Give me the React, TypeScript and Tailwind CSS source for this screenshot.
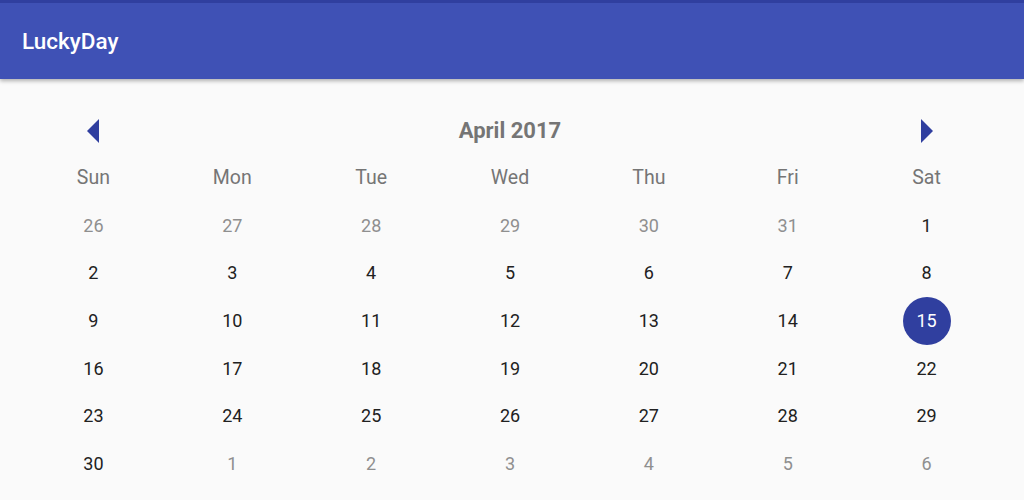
export default function App() {
  const days = ["Sun", "Mon", "Tue", "Wed", "Thu", "Fri", "Sat"];
  const cells: { n: number; cur: boolean }[] = [];
  [26, 27, 28, 29, 30, 31].forEach((n) => cells.push({ n, cur: false }));
  for (let i = 1; i <= 30; i++) cells.push({ n: i, cur: true });
  for (let i = 1; i <= 6; i++) cells.push({ n: i, cur: false });
  const selected = 15;

  return (
    <div className="w-[1024px] h-[500px] overflow-hidden bg-[#fafafa] font-['Roboto',sans-serif]">
      <div className="relative z-10 bg-[#3f51b5] border-t-[3px] border-[#303f9f] h-[79px] flex items-center px-[22px] shadow-[0_2px_4px_rgba(0,0,0,0.3)]">
        <span className="text-white text-[22.5px] font-medium pt-[2px]">LuckyDay</span>
      </div>

      <div className="ml-6 w-[972px]">
        <div className="grid grid-cols-7 h-[47px] mt-[28px] items-center">
          <div className="flex justify-center">
            <svg width="12" height="24" viewBox="0 0 12 24">
              <polygon points="12,0 0,12 12,24" fill="#303f9f" />
            </svg>
          </div>
          <div className="col-span-5 text-center text-[22px] font-bold text-[#757575]">
            April 2017
          </div>
          <div className="flex justify-center">
            <svg width="12" height="24" viewBox="0 0 12 24">
              <polygon points="0,0 12,12 0,24" fill="#303f9f" />
            </svg>
          </div>
        </div>

        <div className="grid grid-cols-7">
          {days.map((d) => (
            <div key={d} className="h-[47.6px] flex items-center justify-center text-[19.5px] text-[#757575]">
              {d}
            </div>
          ))}
          {cells.map((c, i) => (
            <div key={i} className="h-[47.6px] flex items-center justify-center">
              {c.cur && c.n === selected ? (
                <span className="w-[48px] h-[48px] rounded-full bg-[#303f9f] text-white text-[18px] flex items-center justify-center">
                  {c.n}
                </span>
              ) : (
                <span className={c.cur ? "text-[18px] text-[#212121]" : "text-[18px] text-[#8f8f8f]"}>
                  {c.n}
                </span>
              )}
            </div>
          ))}
        </div>
      </div>
    </div>
  );
}
